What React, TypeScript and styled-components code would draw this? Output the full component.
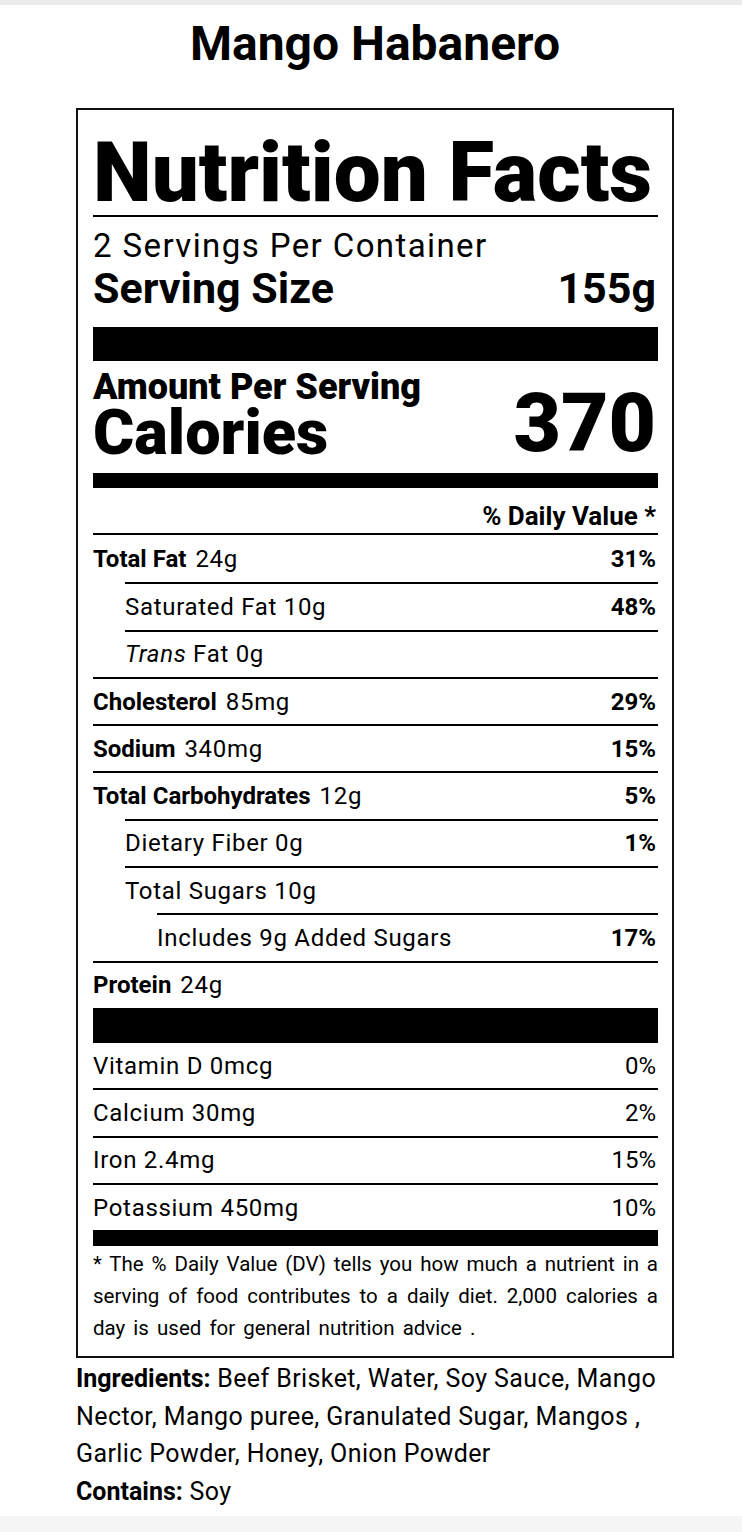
import React, { FC, ReactNode } from "react"
import styled, { createGlobalStyle } from "styled-components"

const GlobalStyle = createGlobalStyle`
    html, body {
        margin: 0;
        padding: 0;
        background: #f5f5f5;
    }
    body {
        font-family: Roboto, "Liberation Sans", sans-serif;
        color: #000;
    }
`

const TopStrip = styled.div`
    height: 5px;
    background: #ebebeb;
`

const Page = styled.main`
    background: #fff;
    padding: 11px 0 6px 8px;
`

const Content = styled.div`
    width: 598px;
    margin: 0 auto;
`

const Title = styled.h1`
    margin: 0;
    font-size: 48px;
    line-height: 56px;
    font-weight: 700;
    text-align: center;
`

const Label = styled.section`
    margin-top: 36px;
    border: 2px solid #111;
    padding: 21px 14px 12px 15px;
`

const Heading = styled.h2`
    margin: 0;
    font-size: 83.5px;
    line-height: 84px;
    font-weight: 900;
    white-space: nowrap;
    border-bottom: 2px solid #000;
`

const Servings = styled.div`
    margin-top: 11px;
    font-size: 33px;
    line-height: 36px;
    letter-spacing: 1.4px;
`

const ServingSize = styled.div`
    display: flex;
    justify-content: space-between;
    margin-top: 2px;
    padding: 0 2px 17px 0;
    font-size: 43px;
    line-height: 44px;
    font-weight: 700;
`

const Bar = styled.div<{ $h: number }>`
    height: ${p => p.$h}px;
    background: #000;
`

const CaloriesBlock = styled.div`
    display: flex;
    justify-content: space-between;
    align-items: flex-end;
    padding: 10px 2px 14px 0;
`

const AmountPer = styled.div`
    font-size: 36px;
    line-height: 33px;
    font-weight: 900;
`

const CaloriesLabel = styled.div`
    margin-top: 3px;
    font-size: 63px;
    line-height: 52px;
    font-weight: 900;
`

const CaloriesValue = styled.div`
    font-size: 82px;
    line-height: 72px;
    font-weight: 900;
`

const DailyHeader = styled.div`
    height: 45px;
    padding: 12px 2px 0 0;
    box-sizing: border-box;
    text-align: right;
    font-size: 26px;
    line-height: 33px;
    font-weight: 700;
`

const Row = styled.div<{ $indent?: number; $first?: boolean; $tall?: boolean }>`
    display: flex;
    justify-content: space-between;
    align-items: center;
    min-height: ${p => (p.$tall ? 47.3 : 45.3)}px;
    margin-left: ${p => (p.$indent || 0) * 32}px;
    padding-right: 2px;
    border-top: ${p => (p.$first ? "none" : "2px solid #000")};
    font-size: 24px;
    line-height: 28px;
    letter-spacing: 0.7px;
`

const Name = styled.span`
    strong {
        font-weight: 700;
        letter-spacing: 0;
        margin-right: 9px;
    }
    em {
        font-style: italic;
    }
`

const Percent = styled.span<{ $bold?: boolean }>`
    font-weight: ${p => (p.$bold ? 700 : 400)};
    letter-spacing: 0;
`

const Footnote = styled.div`
    margin-top: 2px;
    font-size: 20.5px;
    line-height: 32px;
`

const FootLine = styled.span<{ $justify?: boolean }>`
    display: block;
    text-align: ${p => (p.$justify ? "justify" : "left")};
    text-align-last: ${p => (p.$justify ? "justify" : "left")};
    word-spacing: ${p => (p.$justify ? 0 : 3)}px;
`

const Ingredients = styled.p<{ $gap?: number }>`
    margin: ${p => p.$gap ?? 0}px 0 0;
    font-size: 25px;
    line-height: 37.5px;
    letter-spacing: 0.4px;

    strong {
        font-weight: 700;
        letter-spacing: 0;
    }
`

interface Nutrient {
    readonly name: ReactNode
    readonly amount: string
    readonly dv?: string
    readonly bold?: boolean
    readonly indent?: number
}

const nutrients: Nutrient[] = [
    { name: "Total Fat", amount: "24g", dv: "31%", bold: true },
    { name: "Saturated Fat", amount: "10g", dv: "48%", indent: 1 },
    { name: <><em>Trans</em> Fat</>, amount: "0g", indent: 1 },
    { name: "Cholesterol", amount: "85mg", dv: "29%", bold: true },
    { name: "Sodium", amount: "340mg", dv: "15%", bold: true },
    { name: "Total Carbohydrates", amount: "12g", dv: "5%", bold: true },
    { name: "Dietary Fiber", amount: "0g", dv: "1%", indent: 1 },
    { name: "Total Sugars", amount: "10g", indent: 1 },
    { name: "Includes 9g Added Sugars", amount: "", dv: "17%", indent: 2 },
    { name: "Protein", amount: "24g", bold: true },
]

const vitamins = [
    { name: "Vitamin D", amount: "0mcg", dv: "0%" },
    { name: "Calcium", amount: "30mg", dv: "2%" },
    { name: "Iron", amount: "2.4mg", dv: "15%" },
    { name: "Potassium", amount: "450mg", dv: "10%" },
]

const App: FC = () => (
    <>
        <GlobalStyle />
        <TopStrip />
        <Page>
            <Content>
                <Title>Mango Habanero</Title>
                <Label>
                    <Heading>Nutrition Facts</Heading>
                    <Servings>2 Servings Per Container</Servings>
                    <ServingSize>
                        <span>Serving Size</span>
                        <span>155g</span>
                    </ServingSize>
                    <Bar $h={34} />
                    <CaloriesBlock>
                        <div>
                            <AmountPer>Amount Per Serving</AmountPer>
                            <CaloriesLabel>Calories</CaloriesLabel>
                        </div>
                        <CaloriesValue>370</CaloriesValue>
                    </CaloriesBlock>
                    <Bar $h={15} />
                    <DailyHeader>% Daily Value *</DailyHeader>
                    {nutrients.map((n, i) => (
                        <Row key={i} $indent={n.indent} $tall={i === 0}>
                            <Name>
                                {n.bold ? <strong>{n.name}</strong> : <>{n.name} </>}
                                {n.amount}
                            </Name>
                            {n.dv && <Percent $bold>{n.dv}</Percent>}
                        </Row>
                    ))}
                    <Bar $h={35} />
                    {vitamins.map((v, i) => (
                        <Row key={v.name} $first={i === 0}>
                            <Name>
                                {v.name} {v.amount}
                            </Name>
                            <Percent>{v.dv}</Percent>
                        </Row>
                    ))}
                    <Bar $h={16} />
                    <Footnote>
                        <FootLine $justify>
                            * The % Daily Value (DV) tells you how much a nutrient in a
                        </FootLine>
                        <FootLine $justify>
                            serving of food contributes to a daily diet. 2,000 calories a
                        </FootLine>
                        <FootLine>day is used for general nutrition advice .</FootLine>
                    </Footnote>
                </Label>
                <Ingredients $gap={2}>
                    <strong>Ingredients:</strong> Beef Brisket, Water, Soy Sauce, Mango Nector, Mango
                    puree, Granulated Sugar, Mangos , Garlic Powder, Honey, Onion Powder
                </Ingredients>
                <Ingredients>
                    <strong>Contains:</strong> Soy
                </Ingredients>
            </Content>
        </Page>
    </>
)

export default App
